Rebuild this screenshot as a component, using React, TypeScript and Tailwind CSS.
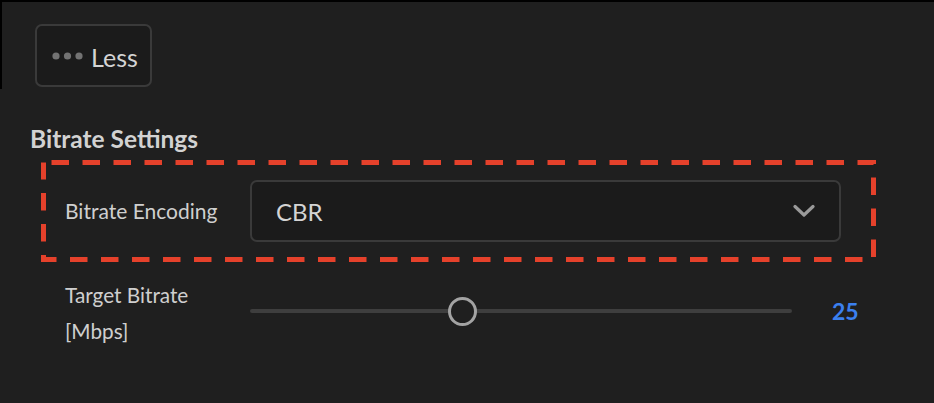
import React from "react";

const font = { fontFamily: "Lato, 'Open Sans', sans-serif" };

function Dots() {
  return (
    <svg width="31" height="8" viewBox="0 0 31 8" className="mr-[8px]">
      <circle cx="4" cy="4" r="3.6" fill="#737373" />
      <circle cx="15.5" cy="4" r="3.6" fill="#737373" />
      <circle cx="27" cy="4" r="3.6" fill="#737373" />
    </svg>
  );
}

function Chevron() {
  return (
    <svg width="22" height="14" viewBox="0 0 22 14">
      <path d="M2 2.5 L11 11 L20 2.5" fill="none" stroke="#9a9a9a" strokeWidth="3.2" strokeLinecap="round" strokeLinejoin="round" />
    </svg>
  );
}

export default function App() {
  return (
    <div className="w-[934px] h-[403px] bg-[#1f1f1f] overflow-hidden" style={font}>
      {/* top strip with the toggle */}
      <div className="h-[89px] border-t-2 border-l-2 border-black pl-[33px] pt-[22px]">
        <button className="w-[117px] h-[63px] flex items-center pl-[15px] rounded-[7px] border-2 border-[#3a3a3a] bg-[#1b1b1b] text-[#d4d4d4] text-[25px]">
          <Dots />
          <span className="mt-[4px]">Less</span>
        </button>
      </div>

      <section className="pl-[30px] pt-[35px]">
        <h2 className="text-[24.5px] leading-[30px] font-bold text-[#d2d2d2]">Bitrate Settings</h2>

        {/* highlighted row */}
        <div className="relative ml-[11px] mt-[6px] w-[835px] h-[102px] flex items-center pl-[24px]">
          <svg className="absolute inset-0" width="835" height="102" viewBox="0 0 835 102">
            <rect x="2.5" y="2.5" width="830" height="97" fill="none" stroke="#e5412b" strokeWidth="5" strokeDasharray="17.5 13.5" strokeDashoffset="-8" />
          </svg>
          <span className="w-[185px] text-[21px] text-[#cfcfcf]">Bitrate Encoding</span>
          <div className="w-[591px] h-[62px] rounded-[7px] border-2 border-[#3a3a3a] bg-[#1b1b1b] flex items-center justify-between pl-[24px] pr-[24px]">
            <span className="text-[24px] text-[#d4d4d4] mt-[2px]">CBR</span>
            <Chevron />
          </div>
        </div>

        {/* slider row */}
        <div className="flex items-start pl-[35px] mt-[15px]">
          <div className="w-[185px] text-[20.75px] leading-[36px] text-[#cfcfcf]">
            Target Bitrate
            <br />
            [Mbps]
          </div>
          <div className="flex items-center h-[32px] mt-[18px]">
            <div className="relative w-[542px] h-[32px] flex items-center">
              <div className="w-full h-[4px] rounded-full bg-[#3e3e3e]" />
              <div className="absolute left-[198px] top-[2px] w-[29px] h-[29px] rounded-full border-[3px] border-[#a3a3a3] bg-[#1f1f1f]" />
            </div>
            <span className="ml-[40px] text-[23px] font-bold text-[#3b80ef]">25</span>
          </div>
        </div>
      </section>
    </div>
  );
}
